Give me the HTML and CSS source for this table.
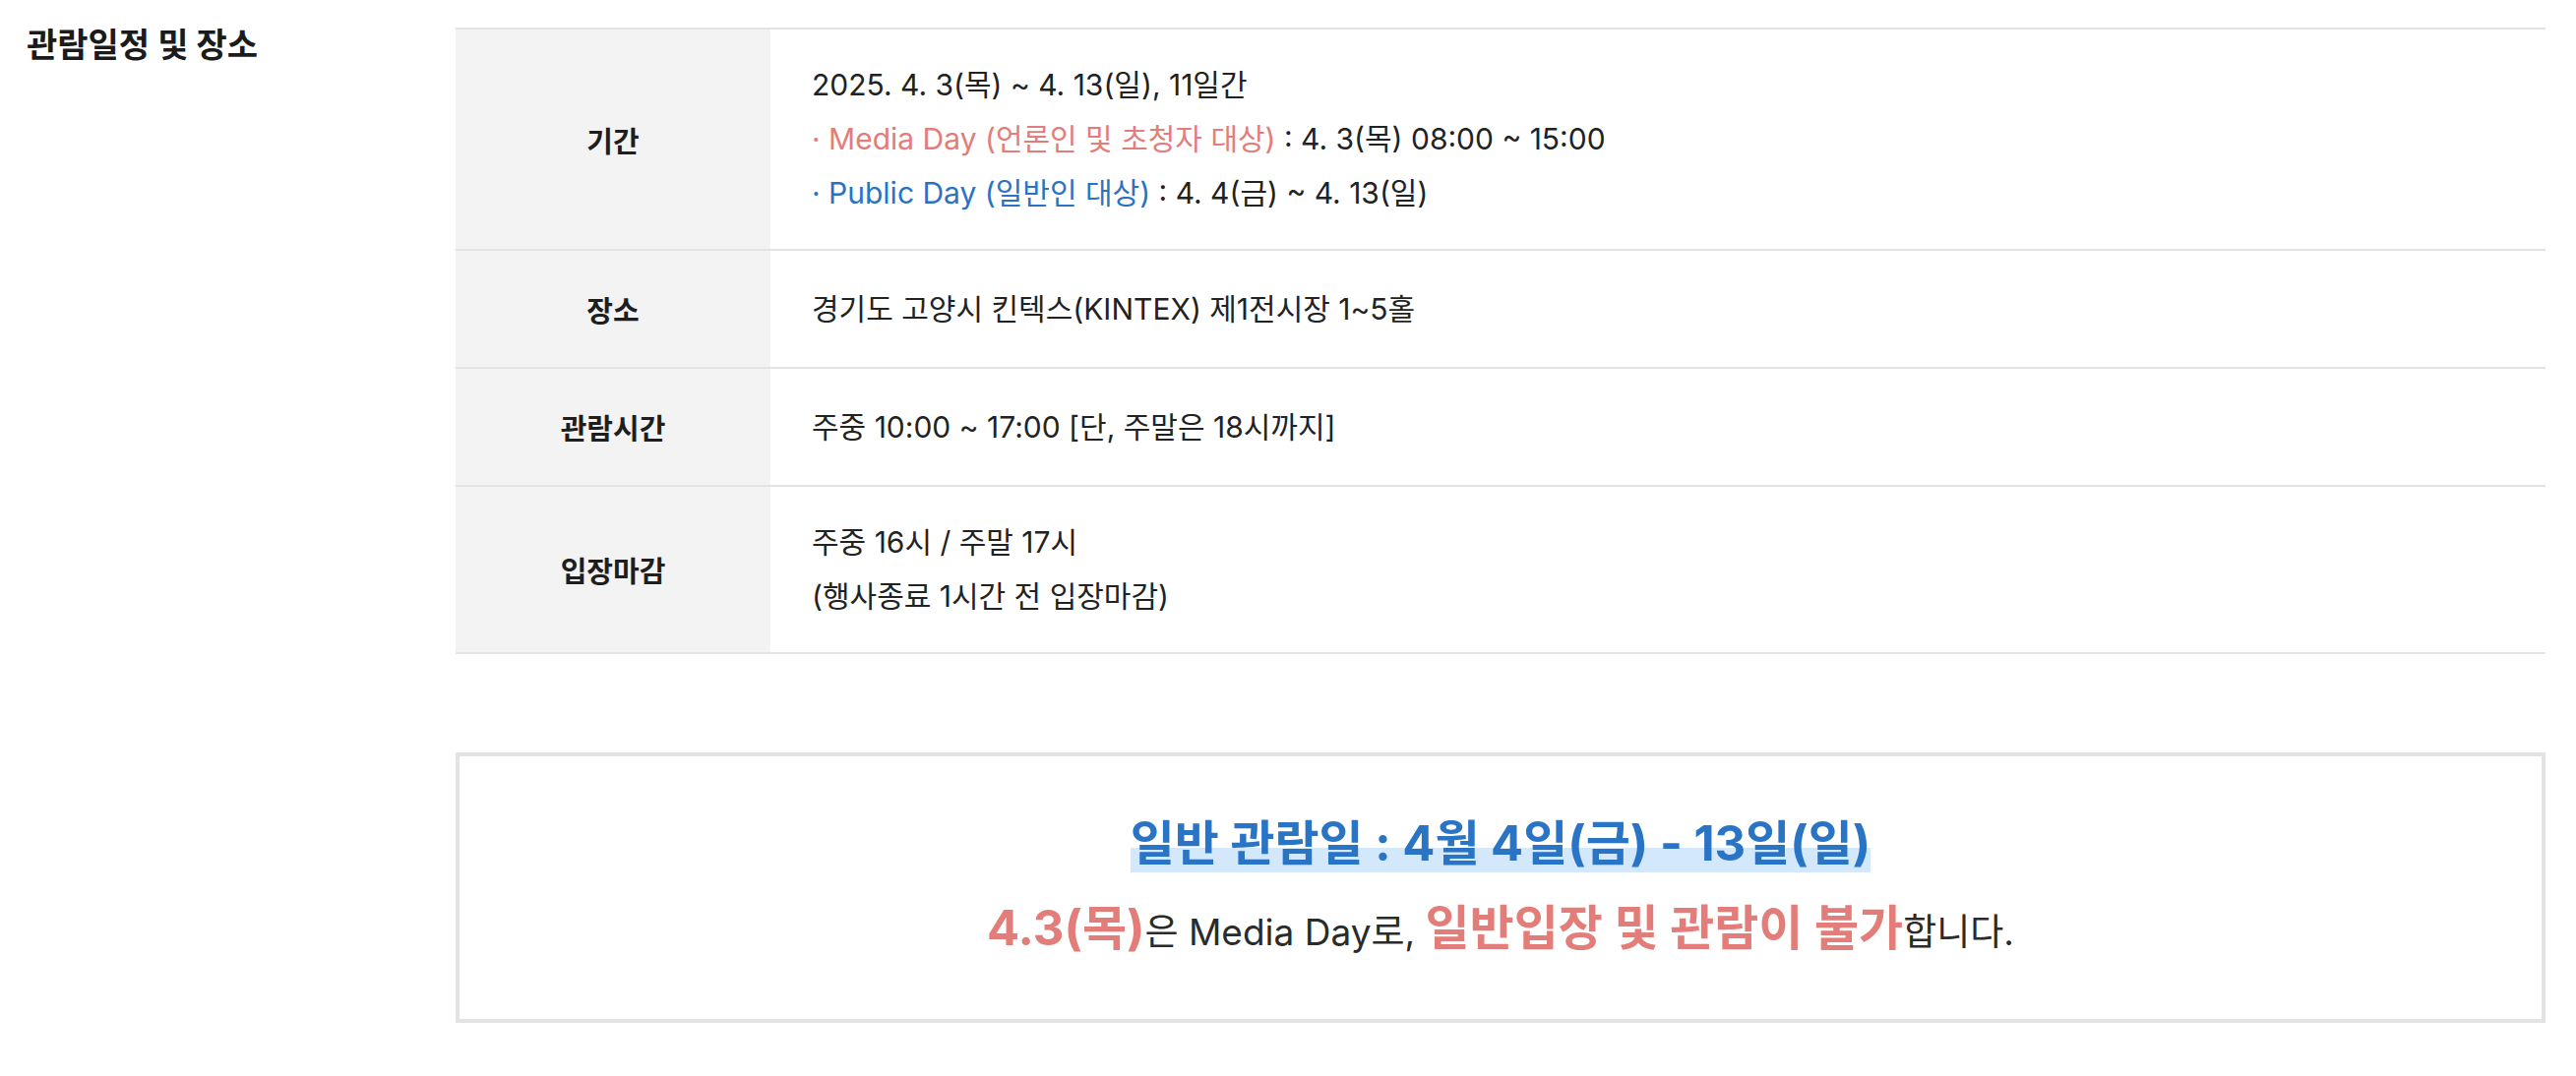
FILE: index.html
```html
<!DOCTYPE html>
<html lang="ko">
<head>
<meta charset="utf-8">
<title>관람일정 및 장소</title>
<link rel="stylesheet" href="styles.css">
</head>
<body>
<section class="section">
  <h2 class="section-title">관람일정 및 장소</h2>
  <div class="section-body">
    <div class="info">
      <div class="info-row">
        <div class="info-head">기간</div>
        <div class="info-cell">
          <p>2025. 4. 3(목) ~ 4. 13(일), 11일간</p>
          <p><span class="red">· Media Day (언론인 및 초청자 대상)</span> : 4. 3(목) 08:00 ~ 15:00</p>
          <p><span class="blue">· Public Day (일반인 대상)</span> : 4. 4(금) ~ 4. 13(일)</p>
        </div>
      </div>
      <div class="info-row">
        <div class="info-head">장소</div>
        <div class="info-cell">
          <p>경기도 고양시 킨텍스(KINTEX) 제1전시장 1~5홀</p>
        </div>
      </div>
      <div class="info-row">
        <div class="info-head">관람시간</div>
        <div class="info-cell">
          <p>주중 10:00 ~ 17:00 [단, 주말은 18시까지]</p>
        </div>
      </div>
      <div class="info-row">
        <div class="info-head">입장마감</div>
        <div class="info-cell">
          <p>주중 16시 / 주말 17시</p>
          <p>(행사종료 1시간 전 입장마감)</p>
        </div>
      </div>
    </div>

    <div class="notice">
      <p class="notice-title"><span class="mark">일반 관람일 : 4월 4일(금) - 13일(일)</span></p>
      <p class="notice-text"><strong class="red">4.3(목)</strong>은 Media Day로, <strong class="red">일반입장 및 관람이 불가</strong>합니다.</p>
    </div>
  </div>
</section>
</body>
</html>
```

FILE: styles.css
```css
html, body {
  margin: 0;
  padding: 0;
  background: #ffffff;
}

body {
  font-family: "Inter", "Noto Sans CJK KR", "Noto Sans", sans-serif;
  color: #222222;
}

p {
  margin: 0;
}

.section {
  display: flex;
  padding: 28px 0 0 27px;
  width: 2560px;
}

.section-title {
  flex: 0 0 436px;
  margin: 0;
  font-size: 34px;
  line-height: 36px;
  font-weight: 700;
  color: #1b1b1b;
}

.section-body {
  flex: 0 0 2124px;
}

.info {
  border-top: 2px solid #e3e3e3;
}

.info-row {
  display: grid;
  grid-template-columns: 320px 1fr;
  min-height: 118px;
  border-bottom: 2px solid #e3e3e3;
}

.info-head {
  background: #f3f3f3;
  display: flex;
  align-items: center;
  justify-content: center;
  font-size: 29px;
  font-weight: 700;
  color: #1e1e1e;
}

.info-cell {
  display: flex;
  flex-direction: column;
  justify-content: center;
  padding: 29px 42px;
  font-size: 30px;
  line-height: 55px;
  color: #222222;
}

.red {
  color: #e27d79;
}

.blue {
  color: #2a72c4;
}

.notice {
  margin-top: 100px;
  border: 4px solid #e3e3e3;
  height: 267px;
  display: flex;
  flex-direction: column;
  justify-content: center;
  align-items: center;
  gap: 26px;
}

.notice-title {
  font-size: 49px;
  line-height: 60px;
  font-weight: 700;
  color: #2a74c5;
}

.mark {
  background: linear-gradient(to bottom, transparent 58%, #d4e8fc 58%);
}

.notice-text {
  font-size: 37px;
  line-height: 60px;
  color: #2b2b2b;
}

.notice-text strong {
  font-size: 49px;
  font-weight: 700;
}
```
